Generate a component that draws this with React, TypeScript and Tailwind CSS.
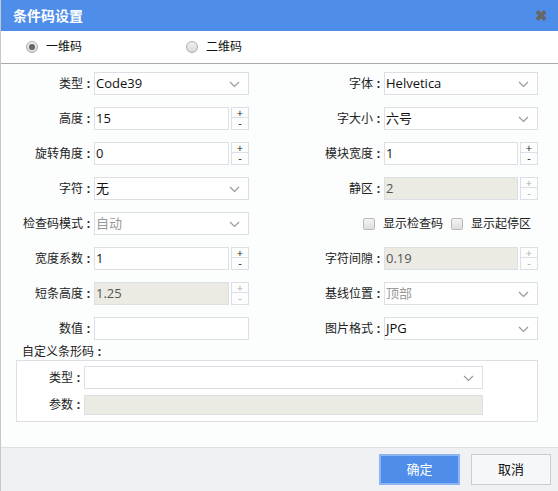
import React from 'react';

const font = "font-['Open_Sans','Noto_Sans_CJK_SC',sans-serif]";

function Label({ text, w }: { text: string; w: string }) {
  return (
    <div className={`${w} shrink-0 flex justify-end items-center text-[12px] text-[#222]`}>
      <span>{text}</span>
      <span className="w-[11px] text-center font-bold">:</span>
    </div>
  );
}

function Chevron() {
  return (
    <svg width="11" height="7" viewBox="0 0 11 7" className="absolute right-[8px] top-[8px]">
      <path d="M1 1 L5.5 5.5 L10 1" fill="none" stroke="#999" strokeWidth="1.2" />
    </svg>
  );
}

function Select({ value, w, disabled }: { value: string; w: string; disabled?: boolean }) {
  return (
    <div className={`relative ${w} h-[23px] border border-[#dcdfe6] bg-white flex items-center pl-[1px] text-[13px] ${disabled ? 'text-[#999]' : 'text-[#111]'}`}>
      {value}
      <Chevron />
    </div>
  );
}

function Input({ value, w, disabled }: { value: string; w: string; disabled?: boolean }) {
  return (
    <div className={`${w} h-[23px] border border-[#dcdfe6] flex items-center pl-[1px] text-[13px] ${disabled ? 'bg-[#ebebe4] text-[#555]' : 'bg-white text-[#111]'}`}>
      {value}
    </div>
  );
}

function Spinner({ value, w, disabled }: { value: string; w: string; disabled?: boolean }) {
  const c = disabled ? 'text-[#aaa]' : 'text-[#222]';
  return (
    <div className="flex h-[23px]">
      <Input value={value} w={w} disabled={disabled} />
      <div className="ml-[2px] flex flex-col w-[18px] h-[23px]">
        <div className={`h-[11px] border border-[#dcdfe6] text-center text-[11px] leading-[9px] ${c}`}>+</div>
        <div className={`h-[12px] border border-t-0 border-[#dcdfe6] text-center text-[11px] leading-[10px] ${c}`}>-</div>
      </div>
    </div>
  );
}

function Checkbox({ text }: { text: string }) {
  return (
    <div className="flex items-center">
      <div className="w-[12px] h-[12px] rounded-[2px] border border-[#bbb] bg-gradient-to-b from-[#f4f4f4] to-[#dedede]" />
      <span className="ml-[8px] text-[12px] text-[#222]">{text}</span>
    </div>
  );
}

function Radio({ checked, text }: { checked?: boolean; text: string }) {
  return (
    <div className="flex items-center">
      <div className="w-[12px] h-[12px] rounded-full border border-[#aaa] bg-gradient-to-b from-[#f2f2f2] to-[#d8d8d8] flex items-center justify-center">
        {checked && <div className="w-[6px] h-[6px] rounded-full bg-[#666]" />}
      </div>
      <span className="ml-[8px] text-[12px] text-[#111]">{text}</span>
    </div>
  );
}

export default function App() {
  const LW = 'w-[93px]';
  const RW = 'w-[135px]';
  return (
    <div className={`${font} w-[558px] h-[491px] bg-white border-l border-[#c8c8c8] flex flex-col overflow-hidden`}>
      <div className="h-[31px] shrink-0 bg-[#4f8dea] flex items-center justify-between pl-[12px] pr-[10px]">
        <span className="text-white font-bold text-[14px]">条件码设置</span>
        <span className="text-[#666] font-bold text-[15px] leading-none">✖</span>
      </div>

      <div className="h-[33px] shrink-0 flex items-center pl-[25px] border-b border-[#aaa]">
        <div className="w-[160px]"><Radio checked text="一维码" /></div>
        <Radio text="二维码" />
      </div>

      <div className="flex-1 bg-[#fcfdfd] pt-[8px] flex flex-col gap-[12px]">
        <div className="flex items-center">
          <Label text="类型" w={LW} /><Select value="Code39" w="w-[155px]" />
          <Label text="字体" w={RW} /><Select value="Helvetica" w="w-[154px]" />
        </div>
        <div className="flex items-center">
          <Label text="高度" w={LW} /><Spinner value="15" w="w-[135px]" />
          <Label text="字大小" w={RW} /><Select value="六号" w="w-[154px]" />
        </div>
        <div className="flex items-center">
          <Label text="旋转角度" w={LW} /><Spinner value="0" w="w-[135px]" />
          <Label text="模块宽度" w={RW} /><Spinner value="1" w="w-[134px]" />
        </div>
        <div className="flex items-center">
          <Label text="字符" w={LW} /><Select value="无" w="w-[155px]" />
          <Label text="静区" w={RW} /><Spinner value="2" w="w-[134px]" disabled />
        </div>
        <div className="flex items-center">
          <Label text="检查码模式" w={LW} /><Select value="自动" w="w-[155px]" disabled />
          <div className="ml-[114px] flex items-center gap-[8px]">
            <Checkbox text="显示检查码" />
            <Checkbox text="显示起停区" />
          </div>
        </div>
        <div className="flex items-center">
          <Label text="宽度系数" w={LW} /><Spinner value="1" w="w-[135px]" />
          <Label text="字符间隙" w={RW} /><Spinner value="0.19" w="w-[134px]" disabled />
        </div>
        <div className="flex items-center">
          <Label text="短条高度" w={LW} /><Spinner value="1.25" w="w-[135px]" disabled />
          <Label text="基线位置" w={RW} /><Select value="顶部" w="w-[154px]" disabled />
        </div>
        <div className="flex items-center">
          <Label text="数值" w={LW} /><Input value="" w="w-[155px]" />
          <Label text="图片格式" w={RW} /><Select value="JPG" w="w-[154px]" />
        </div>

        <div className="-mt-[8px] pl-[21px] flex items-center text-[12px] text-[#222] leading-[16px]">
          <span>自定义条形码</span><span className="w-[11px] text-center font-bold">:</span>
        </div>
        <div className="-mt-[12px] ml-[15px] w-[522px] h-[62px] border border-[#dcdfe6] bg-white flex flex-col pt-[5px] gap-[6px]">
          <div className="flex items-center">
            <Label text="类型" w="w-[67px]" /><Select value="" w="w-[399px]" />
          </div>
          <div className="flex items-center">
            <Label text="参数" w="w-[67px]" />
            <div className="w-[399px] h-[20px] border border-[#dcdfe6] bg-[#ebebe4]" />
          </div>
        </div>
      </div>

      <div className="h-[44px] shrink-0 bg-[#f0f1f5] border-t border-[#dcdfe6] flex items-center justify-end pr-[7px] gap-[11px]">
        <button className="w-[81px] h-[31px] bg-[#4f8dea] border-2 border-[#8db5f2] text-white text-[13px]">确定</button>
        <button className="w-[80px] h-[31px] bg-[#f6f7f9] border border-[#ccc] text-[#111] text-[13px]">取消</button>
      </div>
    </div>
  );
}
